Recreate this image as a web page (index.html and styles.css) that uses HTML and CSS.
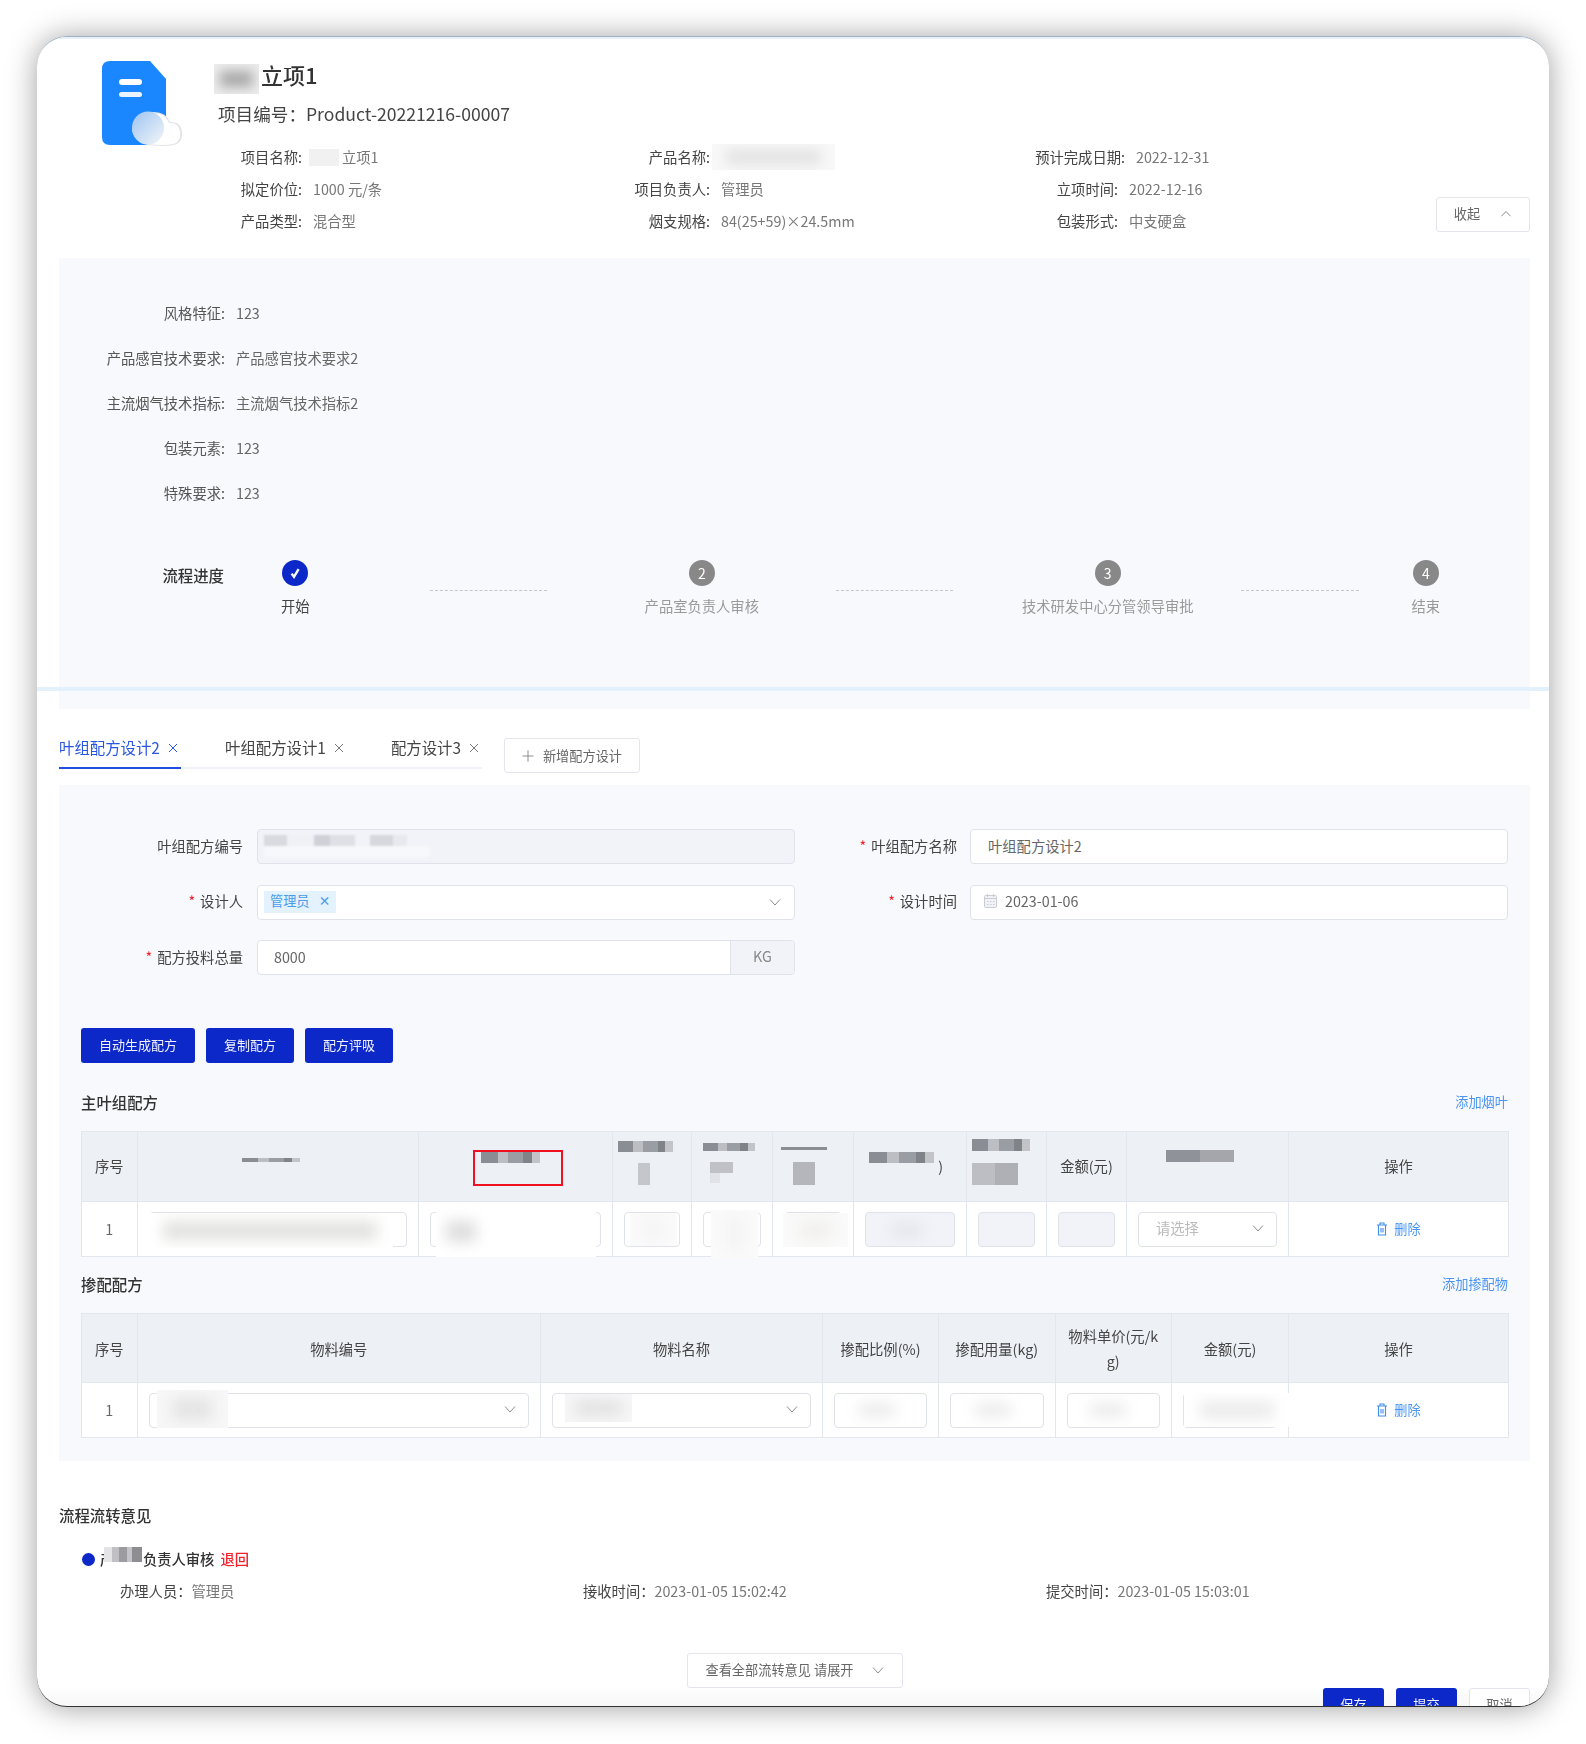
FILE: index.html
```html
<!DOCTYPE html>
<html lang="zh-CN">
<head>
<meta charset="utf-8">
<title>立项详情</title>
<link rel="stylesheet" href="styles.css">
</head>
<body>
<main class="card">
  <div class="stripe-top"></div>
  <div class="stripe-mid"></div>

  <header class="head">
    <div class="head-top">
      <svg class="doc-icon" width="80" height="86" viewBox="0 0 80 86">
        <defs>
          <linearGradient id="cloudA" x1="0" y1="0" x2="1" y2="1">
            <stop offset="0" stop-color="#9cc4f2"/>
            <stop offset="1" stop-color="#f4f6f8"/>
          </linearGradient>
        </defs>
        <path d="M8 0H48L64 18V76Q64 84 56 84H8Q0 84 0 76V8Q0 0 8 0Z" fill="#1a86ff"/>
        <rect x="17" y="18" width="23" height="6" rx="3" fill="#fff"/>
        <rect x="17" y="31" width="23" height="5" rx="2.5" fill="#eaf3ff"/>
        <path d="M46 84Q62 86 72 84Q81 82 80 71Q79 60 68 61Q64 51 52 51Q33 52 30 68Q31 80 46 84Z" fill="#e3e5e8"/>
        <path d="M46 83Q62 85 71 83Q79 81 78 71Q77 61 67 62Q63 52 52 52Q34 53 31 68Q32 79 46 83Z" fill="#fff"/>
        <ellipse cx="46" cy="67" rx="16" ry="16.5" fill="url(#cloudA)"/>
      </svg>
      <div class="title-block">
        <h1 class="title"><span class="smear smear-title"></span>立项1</h1>
        <p class="sub">项目编号：Product-20221216-00007</p>
      </div>
    </div>
    <div class="head-info">
      <dl class="info">
        <div class="info-item"><dt>项目名称:</dt><dd><span class="smear smear-name"></span>立项1</dd></div>
        <div class="info-item"><dt>产品名称:</dt><dd><span class="smear smear-product"></span></dd></div>
        <div class="info-item info-shift"><dt>预计完成日期:</dt><dd>2022-12-31</dd></div>
        <div class="info-item"><dt>拟定价位:</dt><dd>1000 元/条</dd></div>
        <div class="info-item"><dt>项目负责人:</dt><dd>管理员</dd></div>
        <div class="info-item"><dt>立项时间:</dt><dd>2022-12-16</dd></div>
        <div class="info-item"><dt>产品类型:</dt><dd>混合型</dd></div>
        <div class="info-item"><dt>烟支规格:</dt><dd>84(25+59)×24.5mm</dd></div>
        <div class="info-item"><dt>包装形式:</dt><dd>中支硬盒</dd></div>
      </dl>
      <button class="btn btn-collapse">收起
        <svg width="12" height="12" viewBox="0 0 12 12"><path d="M1.5 8.2L6 3.5l4.5 4.7" class="chev"/></svg>
      </button>
    </div>
  </header>

  <section class="panel panel-req">
    <dl class="req">
      <div class="req-row"><dt>风格特征:</dt><dd>123</dd></div>
      <div class="req-row"><dt>产品感官技术要求:</dt><dd>产品感官技术要求2</dd></div>
      <div class="req-row"><dt>主流烟气技术指标:</dt><dd>主流烟气技术指标2</dd></div>
      <div class="req-row"><dt>包装元素:</dt><dd>123</dd></div>
      <div class="req-row"><dt>特殊要求:</dt><dd>123</dd></div>
    </dl>
    <div class="progress">
      <div class="progress-label">流程进度</div>
      <div class="steps">
        <div class="step step-done">
          <span class="dot"><svg width="14" height="14" viewBox="0 0 14 14"><path d="M3.6 7.6L6 10.8L10.6 3.2" fill="none" stroke="#fff" stroke-width="2.4"/></svg></span>
          <span class="step-text">开始</span>
        </div>
        <span class="step-line line-a"></span>
        <div class="step"><span class="dot">2</span><span class="step-text">产品室负责人审核</span></div>
        <span class="step-line line-b"></span>
        <div class="step"><span class="dot">3</span><span class="step-text">技术研发中心分管领导审批</span></div>
        <span class="step-line line-c"></span>
        <div class="step"><span class="dot">4</span><span class="step-text">结束</span></div>
      </div>
    </div>
  </section>

  <div class="tabs-row">
    <nav class="tabs">
      <div class="tab tab-active">叶组配方设计2<svg class="tab-x" width="10" height="10" viewBox="0 0 10 10"><path d="M1 1l8 8M9 1l-8 8"/></svg></div>
      <div class="tab tab-b">叶组配方设计1<svg class="tab-x" width="10" height="10" viewBox="0 0 10 10"><path d="M1 1l8 8M9 1l-8 8"/></svg></div>
      <div class="tab tab-c">配方设计3<svg class="tab-x" width="10" height="10" viewBox="0 0 10 10"><path d="M1 1l8 8M9 1l-8 8"/></svg></div>
    </nav>
    <button class="btn btn-add"><svg width="12" height="12" viewBox="0 0 12 12"><path d="M6 .5v11M.5 6h11" class="chev"/></svg>新增配方设计</button>
  </div>

  <section class="panel panel-form">
    <form class="form">
      <div class="field"><label class="field-label">叶组配方编号</label>
        <div class="ctl ctl-disabled"><span class="mosaic-code"></span></div></div>
      <div class="field field-r"><label class="field-label req-star">叶组配方名称</label>
        <div class="ctl ctl-name">叶组配方设计2</div></div>
      <div class="field"><label class="field-label req-star">设计人</label>
        <div class="ctl ctl-tagbox"><span class="tag">管理员<i class="tag-x">×</i></span>
          <svg class="select-chev" width="12" height="12" viewBox="0 0 12 12"><path d="M1 3.5L6 9l5-5.5" class="chev"/></svg></div></div>
      <div class="field field-r"><label class="field-label req-star">设计时间</label>
        <div class="ctl ctl-date">
          <svg width="13" height="14" viewBox="0 0 13 14"><rect x=".5" y="1.5" width="12" height="12" rx="1" fill="#f1f2f5" stroke="#c9ccd4"/><path d="M.5 4.5h12M3.5 0v3M9.5 0v3" stroke="#c9ccd4" fill="none"/><path d="M3 7.5h1.5M6 7.5h1.5M9 7.5h1.5M3 10.5h1.5M6 10.5h1.5M9 10.5h1.5" stroke="#c9ccd4" fill="none"/></svg>
          2023-01-06</div></div>
      <div class="field"><label class="field-label req-star">配方投料总量</label>
        <div class="ctl ctl-addon"><span class="addon-input">8000</span><span class="addon">KG</span></div></div>
    </form>

    <div class="actions">
      <button class="btn btn-primary" type="button">自动生成配方</button>
      <button class="btn btn-primary" type="button">复制配方</button>
      <button class="btn btn-primary" type="button">配方评吸</button>
    </div>

    <div class="sec-head sec-main"><h2>主叶组配方</h2><a class="link">添加烟叶</a></div>
    <div class="table-wrap">
      <table class="grid t-main">
        <colgroup><col><col><col><col><col><col><col><col><col><col><col></colgroup>
        <thead><tr>
          <th>序号</th><th></th><th></th><th></th><th></th><th></th>
          <th class="th-paren">)</th><th></th><th>金额(元)</th><th></th><th>操作</th>
        </tr></thead>
        <tbody><tr>
          <td>1</td>
          <td><div class="ctl"></div></td>
          <td><div class="ctl"></div></td>
          <td><div class="ctl"></div></td>
          <td><div class="ctl"></div></td>
          <td><div class="ctl"></div></td>
          <td><div class="ctl ctl-disabled"></div></td>
          <td><div class="ctl ctl-disabled"></div></td>
          <td><div class="ctl ctl-disabled"></div></td>
          <td><div class="ctl ctl-select ctl-placeholder">请选择<svg width="12" height="12" viewBox="0 0 12 12"><path d="M1 3.5L6 9l5-5.5" class="chev"/></svg></div></td>
          <td><a class="link link-del"><svg width="12" height="14" viewBox="0 0 12 14"><path d="M1 3h10M4 3V1h4v2M2.5 3v10h7V3M5 6v4.5M7 6v4.5" fill="none" stroke="#3f8df0" stroke-width="1.1"/></svg>删除</a></td>
        </tr></tbody>
      </table>
      <div class="mos m-a"></div>
      <div class="mos m-b"></div><div class="red-box"></div>
      <div class="mos m-c1"></div><div class="mos m-c2"></div>
      <div class="mos m-d1"></div><div class="mos m-d2"></div><div class="mos m-d3"></div>
      <div class="mos m-e1"></div><div class="mos m-e2"></div>
      <div class="mos m-f"></div>
      <div class="mos m-g1"></div><div class="mos m-g2"></div>
      <div class="mos m-h"></div>
      <div class="patch p1"></div><div class="patch p2"></div><div class="patch p3"></div>
      <div class="patch p4"></div><div class="patch p5"></div><div class="patch p6"></div>
    </div>

    <div class="sec-head sec-blend"><h2>掺配配方</h2><a class="link">添加掺配物</a></div>
    <div class="table-wrap">
      <table class="grid t-blend">
        <colgroup><col><col><col><col><col><col><col><col></colgroup>
        <thead><tr>
          <th>序号</th><th>物料编号</th><th>物料名称</th><th>掺配比例(%)</th><th>掺配用量(kg)</th><th>物料单价(元/kg)</th><th>金额(元)</th><th>操作</th>
        </tr></thead>
        <tbody><tr>
          <td>1</td>
          <td><div class="ctl ctl-select"><svg width="12" height="12" viewBox="0 0 12 12"><path d="M1 3.5L6 9l5-5.5" class="chev"/></svg></div></td>
          <td><div class="ctl ctl-select"><svg width="12" height="12" viewBox="0 0 12 12"><path d="M1 3.5L6 9l5-5.5" class="chev"/></svg></div></td>
          <td><div class="ctl"></div></td>
          <td><div class="ctl"></div></td>
          <td><div class="ctl"></div></td>
          <td><div class="ctl"></div></td>
          <td><a class="link link-del"><svg width="12" height="14" viewBox="0 0 12 14"><path d="M1 3h10M4 3V1h4v2M2.5 3v10h7V3M5 6v4.5M7 6v4.5" fill="none" stroke="#3f8df0" stroke-width="1.1"/></svg>删除</a></td>
        </tr></tbody>
      </table>
      <div class="patch q1"></div><div class="patch q2"></div><div class="patch q3"></div>
      <div class="patch q4"></div><div class="patch q5"></div><div class="patch q6"></div>
    </div>
  </section>

  <section class="opinions">
    <h2 class="op-title">流程流转意见</h2>
    <div class="op-head">
      <span class="op-dot"></span>
      <span class="op-name">产品室负责人审核<span class="mos op-mosaic"></span></span>
      <span class="op-back">退回</span>
    </div>
    <div class="op-detail">
      <div><span class="op-key">办理人员：</span>管理员</div>
      <div><span class="op-key">接收时间：</span>2023-01-05 15:02:42</div>
      <div><span class="op-key">提交时间：</span>2023-01-05 15:03:01</div>
    </div>
    <button class="btn btn-more">查看全部流转意见 请展开
      <svg width="12" height="12" viewBox="0 0 12 12"><path d="M1 3.5L6 9l5-5.5" class="chev"/></svg>
    </button>
    <div class="footer-actions">
      <button class="btn btn-primary btn-foot">保存</button>
      <button class="btn btn-primary btn-foot">提交</button>
      <button class="btn btn-foot">取消</button>
    </div>
  </section>
</main>
</body>
</html>
```

FILE: styles.css
```css
* { box-sizing: border-box; }
html, body { margin: 0; padding: 0; background: #fff; }
body {
  width: 1586px;
  height: 1744px;
  padding: 36px 0 0 37px;
  overflow: hidden;
  font-family: "Noto Sans CJK SC", "Noto Sans", sans-serif;
  font-size: 14.3px;
  line-height: 20px;
  color: #444;
}
h1, h2, p, dl, dd { margin: 0; }

.card {
  position: relative;
  width: 1512px;
  height: 1671px;
  padding: 0 19px 0 22px;
  overflow: hidden;
  border-top: 1px solid #9fb0bf;
  border-bottom: 1px solid #333;
  border-radius: 30px;
  background: linear-gradient(to top, #f7f7f8, #fff 20px);
  box-shadow: 0 1px 30px rgba(0, 0, 0, .38);
  filter: blur(.35px);
}
.stripe-top {
  position: absolute;
  left: 0; right: 0; top: 0;
  height: 2px;
  background: #e6f1fc;
}
.stripe-mid {
  position: absolute;
  left: 0; right: 0; top: 650px;
  height: 4px;
  background: #e3f1fd;
  z-index: 2;
}

/* header */
.head { height: 221px; }
.head-top { display: flex; height: 104px; padding: 24px 0 0 43px; }
.doc-icon { flex: none; }
.title-block { margin-left: 32px; margin-top: -3px; }
.title {
  display: flex;
  align-items: center;
  height: 32px;
  font-size: 22px;
  line-height: 32px;
  font-weight: 500;
  color: #333;
}
.sub { margin: 12px 0 0 4px; font-size: 17.6px; line-height: 24px; color: #444; }
.smear { display: inline-block; position: relative; overflow: hidden; }
.smear::after { content: ""; position: absolute; filter: blur(6px); }
.smear-title { width: 45px; height: 30px; margin: 10px 2px 0 0; background: #ededed; }
.smear-title::after { inset: 7px 6px; background: #a8a8a8; }
.smear-name { width: 30px; height: 17px; margin: 0 3px 0 -4px; vertical-align: -3px; background: #f1f1f1; }
.smear-product { width: 123px; height: 26px; margin-left: -9px; vertical-align: -8px; background: #f8f8f8; }
.smear-product::after { inset: 5px 14px; background: #e4e4e4; }

.head-info { display: flex; height: 117px; }
.info { display: grid; grid-template-columns: repeat(3, 408px); grid-auto-rows: 32px; }
.info-item { display: flex; align-items: center; gap: 11px; }
.info-item dt { width: 243px; text-align: right; color: #444; }
.info-item dd { color: #777; white-space: nowrap; }
.info-shift { padding-left: 7px; }
.btn {
  display: inline-flex;
  align-items: center;
  justify-content: center;
  height: 35px;
  padding: 0 18px 2px;
  border: 1.5px solid #e3e4ee;
  border-radius: 3px;
  background: #fff;
  color: #666;
  font: inherit;
  font-size: 13.2px;
}
.chev { fill: none; stroke: #8d8d8d; stroke-width: 1; }
.btn-collapse {
  gap: 20px;
  width: 94px;
  margin: 56px 0 0 153px;
  padding: 0 0 1px;
}

/* requirements panel */
.panel { background: #f8f9fd; }
.panel-req { height: 451px; padding-top: 32px; }
.req-row { display: flex; align-items: center; gap: 11px; height: 45px; }
.req-row dt { width: 166px; text-align: right; color: #555; }
.req-row dd { color: #666; }

.progress { display: flex; margin-top: 45px; }
.progress-label {
  width: 165px;
  margin-top: 5px;
  text-align: right;
  font-size: 15.4px;
  font-weight: 500;
  color: #333;
}
.steps { display: flex; align-items: flex-start; margin-left: 57px; }
.step { display: flex; flex-direction: column; align-items: center; white-space: nowrap; }
.dot {
  display: flex;
  align-items: center;
  justify-content: center;
  width: 26px;
  height: 26px;
  border-radius: 50%;
  background: #888;
  color: #fff;
  font-size: 14px;
}
.step-text { margin-top: 10px; color: #9a9a9a; }
.step-done .dot { background: #0d28c9; }
.step-done .step-text { color: #444; }
.step-line { width: 117px; margin-top: 30px; border-top: 1px dashed #c6c6c6; }
.line-a { margin-left: 120px; margin-right: 98px; }
.line-b { margin-left: 77px; margin-right: 69px; }
.line-c { margin-left: 47px; margin-right: 53px; width: 118px; }

/* tabs */
.tabs-row { display: flex; height: 76px; padding-top: 29px; }
.tabs { display: flex; width: 423px; height: 31px; border-bottom: 2px solid #f1f2f8; }
.tab { display: flex; height: 31px; line-height: 19px; font-size: 15.4px; color: #444; white-space: nowrap; }
.tab-x { margin: 5px 0 0 8px; fill: none; stroke: #777; stroke-width: 1; }
.tab-active { width: 122px; border-bottom: 2px solid #1f4ee0; color: #2a55e0; }
.tab-active .tab-x { stroke: #2a55e0; }
.tab-b { margin-left: 44px; }
.tab-c { margin-left: 47px; }
.btn-add { gap: 9px; width: 136px; margin-left: 22px; padding: 0; }

/* form */
.panel-form { height: 676px; padding: 44px 22px 0; }
.form {
  display: grid;
  grid-template-columns: 736px 713px;
  row-gap: 20.5px;
  margin-left: -22px;
}
.field { display: flex; align-items: center; gap: 14px; }
.field-label { flex: none; width: 184px; padding-bottom: 2px; text-align: right; color: #444; }
.field-r { gap: 13px; }
.field-r .field-label { width: 162px; }
.req-star::before { content: "*"; margin-right: 5px; color: #f5222d; }
.ctl {
  position: relative;
  display: flex;
  align-items: center;
  flex: 1;
  height: 35px;
  padding: 0 16px 2px;
  border: 1.5px solid #e0e2ea;
  border-radius: 4px;
  background: #fff;
  color: #666;
}
.field .ctl { flex: none; width: 538px; }
.field .ctl-name { padding-left: 17px; }
.ctl-disabled { background: #f1f3f8; }
.mosaic-code {
  width: 166px;
  height: 22px;
  margin-left: -10px;
  background:
    linear-gradient(90deg, #d8dae0 0 14%, #f0f1f5 14% 30%, #cfd1d8 30% 40%, #dee0e5 40% 55%, #f1f3f8 55% 64%, #d6d8de 64% 78%, #e8e9ee 78% 86%, #f1f3f8 86%) 0 0 / 100% 11px no-repeat,
    linear-gradient(#f7f8fb, #f7f8fb) 0 11px / 100% 11px no-repeat;
  filter: blur(1px);
}
.ctl-tagbox { padding: 0 13px 0 6px; justify-content: space-between; }
.tag {
  display: flex;
  align-items: center;
  height: 22px;
  padding: 0 5px 2px 6px;
  background: #e3f2fd;
  color: #4a9ce8;
  font-size: 13.2px;
}
.tag-x { margin-left: 9px; font-style: normal; font-size: 12px; font-weight: 700; }
.select-chev { margin-right: 0; }
.ctl-date { gap: 8px; padding-left: 13px; }
.ctl-addon { padding: 0; overflow: hidden; }
.addon-input { flex: 1; padding: 0 0 2px 16px; }
.addon {
  width: 64px;
  height: 100%;
  border-left: 1.5px solid #e0e2ea;
  background: #f1f3f8;
  color: #888;
  text-align: center;
  line-height: 30px;
}

.actions { display: flex; gap: 11px; margin-top: 53px; }
.actions .btn { padding: 0 0 2px; font-size: 13px; }
.actions .btn:nth-child(1) { width: 114px; }
.actions .btn:nth-child(2),
.actions .btn:nth-child(3) { width: 88px; }
.btn-primary {
  border: 0;
  background: #0d28c9;
  color: #f2f3ff;
}

.sec-head { display: flex; align-items: center; justify-content: space-between; height: 20px; }
.sec-head h2 { font-size: 15.4px; font-weight: 500; color: #333; }
.sec-main { margin-top: 29px; margin-bottom: 19px; }
.sec-blend { margin-top: 17px; margin-bottom: 19px; }
.link { font-size: 13.2px; color: #4b95f3; }

/* tables */
.table-wrap { position: relative; width: 1427px; }
.grid {
  width: 1427px;
  table-layout: fixed;
  border-collapse: collapse;
  border: 1.5px solid #e4e8ef;
}
.grid th, .grid td { border: 1px solid #e2e7ee; padding: 0 11px; text-align: center; }
.grid th { height: 70px; background: #edf0f5; font-weight: 400; color: #444; word-break: break-all; }
.grid td { height: 55px; background: #fff; color: #666; }
.t-main th { padding-bottom: 2px; }
.t-blend th { height: 69px; line-height: 25px; }
.grid .ctl { padding: 0 12px 2px; width: 100%; }
.ctl-select { justify-content: flex-end; }
.grid .ctl-placeholder { justify-content: space-between; padding-left: 17px; color: #bbb; }
.t-main th.th-paren { padding-left: 73px; }
.link-del { display: inline-flex; align-items: center; gap: 6px; }

.t-main col:nth-child(1) { width: 55.5px; }
.t-main col:nth-child(2) { width: 281.5px; }
.t-main col:nth-child(3) { width: 193.7px; }
.t-main col:nth-child(4) { width: 79.3px; }
.t-main col:nth-child(5) { width: 80.6px; }
.t-main col:nth-child(6) { width: 81px; }
.t-main col:nth-child(7) { width: 113.4px; }
.t-main col:nth-child(8) { width: 80px; }
.t-main col:nth-child(9) { width: 80px; }
.t-main col:nth-child(10) { width: 162px; }
.t-main col:nth-child(11) { width: 220px; }
.t-blend col:nth-child(1) { width: 55.5px; }
.t-blend col:nth-child(2) { width: 403.5px; }
.t-blend col:nth-child(3) { width: 282px; }
.t-blend col:nth-child(4) { width: 116px; }
.t-blend col:nth-child(5) { width: 116.5px; }
.t-blend col:nth-child(6) { width: 116.5px; }
.t-blend col:nth-child(7) { width: 117px; }
.t-blend col:nth-child(8) { width: 220px; }

/* redaction overlays */
.mos {
  position: absolute;
  background: linear-gradient(90deg, #8a8d93 0 28%, #bcbec4 28% 46%, #9a9da3 46% 72%, #808388 72% 86%, #c2c4ca 86%);
  filter: blur(.6px);
}
.m-a { left: 161px; top: 27px; width: 58px; height: 4px; }
.m-b { left: 400px; top: 21px; width: 59px; height: 11px; }
.red-box { position: absolute; left: 392px; top: 19px; width: 90px; height: 36px; border: 2px solid #f01020; }
.m-c1 { left: 537px; top: 10px; width: 55px; height: 11px; }
.m-c2 { left: 557px; top: 32px; width: 12px; height: 22px; background: #c4c6cc; }
.m-d1 { left: 622px; top: 12px; width: 52px; height: 8px; }
.m-d2 { left: 629px; top: 31px; width: 23px; height: 11px; background: #bfc1c7; }
.m-d3 { left: 629px; top: 42px; width: 10px; height: 10px; background: #e0e2e8; }
.m-e1 { left: 700px; top: 16px; width: 46px; height: 3px; background: #8a8d93; }
.m-e2 { left: 712px; top: 31px; width: 22px; height: 23px; background: #b4b6bc; }
.m-f { left: 788px; top: 21px; width: 65px; height: 11px; }
.m-g1 { left: 891px; top: 8px; width: 58px; height: 12px; }
.m-g2 { left: 891px; top: 32px; width: 46px; height: 22px; background: linear-gradient(90deg, #bcbec4 0 50%, #aeb0b6 50%); }
.m-h { left: 1085px; top: 19px; width: 68px; height: 12px; background: linear-gradient(90deg, #8f9298 0 50%, #a4a6ac 50% 100%); }

.patch { position: absolute; overflow: hidden; background: #fff; }
.patch::after { content: ""; position: absolute; inset: 8px 16px; background: #ececec; filter: blur(7px); }
.p1 { left: 66px; top: 82px; width: 246px; height: 35px; }
.p1::after { background: #e2e2e0; }
.p2 { left: 355px; top: 75px; width: 160px; height: 51px; }
.p2::after { inset: 15px 120px 15px 10px; background: #dedede; }
.p3 { left: 549px; top: 82px; width: 47px; height: 33px; background: #fafafa; }
.p3::after { background: #f2f2f2; }
.p4 { left: 630px; top: 79px; width: 47px; height: 48px; background: #fafafa; }
.p4::after { background: #f3f3f3; }
.p5 { left: 702px; top: 82px; width: 65px; height: 34px; background: #fafafa; }
.p5::after { background: #f1f0ee; }
.p6 { left: 795px; top: 84px; width: 62px; height: 30px; background: transparent; }
.p6::after { background: #e4e6ea; }
.q1 { left: 76px; top: 77px; width: 71px; height: 38px; background: #f7f7f7; }
.q1::after { background: #e4e4e4; }
.q2 { left: 484px; top: 81px; width: 67px; height: 28px; background: #f7f7f7; }
.q2::after { inset: 6px 10px; background: #e2e2e2; }
.q3 { left: 762px; top: 82px; width: 68px; height: 30px; }
.q4 { left: 878px; top: 82px; width: 68px; height: 30px; }
.q5 { left: 993px; top: 82px; width: 68px; height: 30px; }
.q6 { left: 1103px; top: 80px; width: 106px; height: 34px; }
.q3::after, .q4::after, .q5::after, .q6::after { background: #ececec; }

/* opinions */
.opinions { padding-top: 44px; }
.op-title { font-size: 15.4px; font-weight: 500; color: #333; }
.op-head { display: flex; align-items: center; height: 20px; margin: 24px 0 0 23px; }
.op-dot { width: 13px; height: 13px; border-radius: 50%; background: #0d28c9; }
.op-name { position: relative; margin-left: 5px; font-weight: 500; color: #333; }
.op-mosaic {
  left: 4px;
  top: -2px;
  width: 38px;
  height: 24px;
  background:
    linear-gradient(90deg, #e4e4e6 0 20%, #c0c0c4 20% 40%, #9c9ca0 40% 60%, #c4c4c8 60% 75%, #8e8e92 75%) 0 0 / 100% 15px no-repeat,
    linear-gradient(#fff, #fff);
  filter: none;
}
.op-back { margin-left: 6px; color: #f5222d; font-weight: 500; }
.op-detail { display: grid; grid-template-columns: repeat(3, 463px); margin: 12px 0 0 61px; color: #777; }
.op-key { color: #444; }
.btn-more { display: flex; gap: 18px; width: 216px; margin: 52px auto 0; padding: 0 0 2px; }
.footer-actions { display: flex; justify-content: flex-end; gap: 12px; }
.btn-foot { width: 61px; padding: 0 0 2px; }
```
